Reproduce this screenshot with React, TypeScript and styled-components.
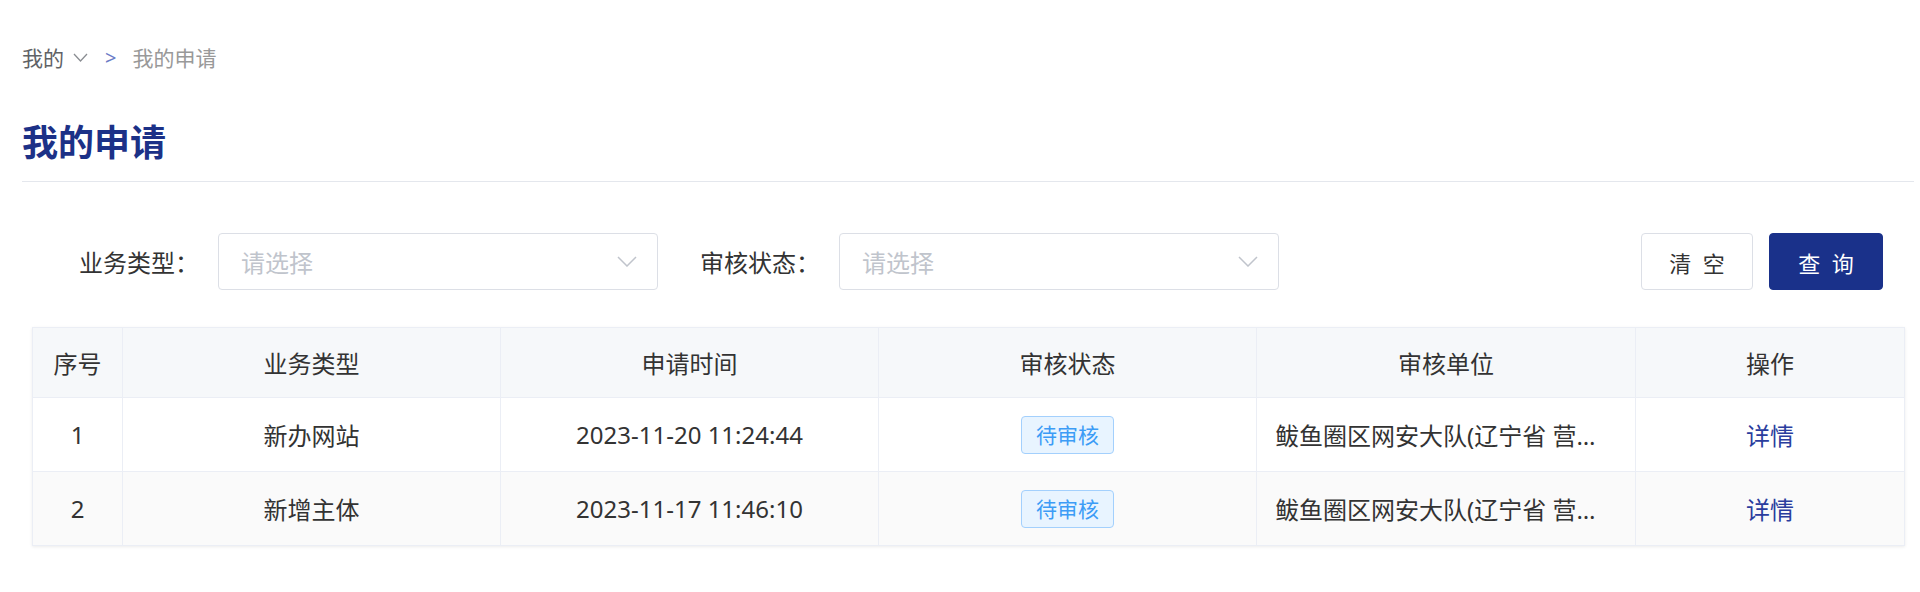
import React from 'react';
import styled, { createGlobalStyle } from 'styled-components';

const GlobalStyle = createGlobalStyle`
  html, body {
    margin: 0;
    padding: 0;
    background: #ffffff;
  }
  body {
    font-family: "Noto Sans", "Noto Sans CJK SC", sans-serif;
    color: #333333;
  }
`;

const Page = styled.div`
  width: 1920px;
  box-sizing: border-box;
  padding: 45px 6px 40px 22px;
`;

const Breadcrumb = styled.div`
  display: flex;
  align-items: center;
  height: 24px;
  font-size: 21px;
`;

const CrumbLink = styled.span`
  color: #5f6266;
  display: flex;
  align-items: center;
`;

const CrumbCaret = styled.svg`
  margin-left: 9px;
`;

const CrumbSep = styled.span`
  color: #6a7cc6;
  margin: 0 16px 0 17px;
  font-size: 20px;
`;

const CrumbCurrent = styled.span`
  color: #999999;
`;

const TitleBar = styled.div`
  margin-top: 50px;
  padding-bottom: 14px;
  border-bottom: 1px solid #e4e7ed;
`;

const Title = styled.h1`
  margin: 0;
  font-size: 36px;
  line-height: 48px;
  font-weight: bold;
  color: #1c3187;
`;

const Content = styled.div`
  padding: 0 10px;
`;

const FilterRow = styled.div`
  display: flex;
  align-items: center;
  margin-top: 51px;
  padding: 0 21px 0 47px;
`;

const Label = styled.span`
  font-size: 24px;
  color: #333333;
  margin-right: 19px;
  white-space: nowrap;
`;

const Select = styled.div`
  width: 440px;
  height: 57px;
  box-sizing: border-box;
  border: 1px solid #dcdfe6;
  border-radius: 4px;
  display: flex;
  align-items: center;
  justify-content: space-between;
  padding: 0 20px 0 22px;
  margin-right: 42px;
`;

const Placeholder = styled.span`
  font-size: 24px;
  color: #c0c4cc;
`;

const Buttons = styled.div`
  margin-left: auto;
  display: flex;
  gap: 16px;
`;

const Button = styled.button<{ $primary?: boolean }>`
  height: 57px;
  width: ${p => (p.$primary ? '114px' : '112px')};
  box-sizing: border-box;
  border-radius: 4px;
  border: 1px solid ${p => (p.$primary ? '#1a318a' : '#dcdfe6')};
  background: ${p => (p.$primary ? '#1a318a' : '#ffffff')};
  color: ${p => (p.$primary ? '#ffffff' : '#333333')};
  font-family: "Noto Sans", "Noto Sans CJK SC", sans-serif;
  font-size: 22px;
  letter-spacing: 3px;
  padding: 0 0 0 3px;
  cursor: pointer;
`;

const Table = styled.table`
  margin-top: 37px;
  width: 1872px;
  table-layout: fixed;
  border-collapse: collapse;
  border: 1px solid #ebeef5;
  box-shadow: 0 1px 3px rgba(0, 0, 0, 0.08);
  font-size: 24px;
`;

const Th = styled.th<{ $w: number }>`
  width: ${p => p.$w}px;
  height: 69px;
  background: #f6f8fa;
  color: #333333;
  font-weight: normal;
  border: 1px solid #ebeef5;
  text-align: center;
  padding: 0;
`;

const Row = styled.tr<{ $striped?: boolean }>`
  background: ${p => (p.$striped ? '#fafafa' : '#ffffff')};
`;

const Td = styled.td`
  height: 73px;
  border: 1px solid #ebeef5;
  text-align: center;
  padding: 0 18px;
  color: #333333;
  white-space: nowrap;
  overflow: hidden;
  text-overflow: ellipsis;
`;

const Tag = styled.span`
  display: inline-block;
  height: 38px;
  line-height: 36px;
  box-sizing: border-box;
  padding: 0 14px;
  font-size: 21px;
  color: #3c9cf6;
  background: #e8f4ff;
  border: 1px solid #a3d0fd;
  border-radius: 4px;
`;

const DetailLink = styled.a`
  color: #2a3d9e;
  text-decoration: none;
  cursor: pointer;
`;

const Chevron = () => (
  <svg width="20" height="11" viewBox="0 0 20 11" fill="none">
    <path d="M1 1 L10 10 L19 1" stroke="#c0c4cc" strokeWidth="1.5" />
  </svg>
);

const columns = [
  { title: '序号', w: 89 },
  { title: '业务类型', w: 377 },
  { title: '申请时间', w: 377 },
  { title: '审核状态', w: 377 },
  { title: '审核单位', w: 378 },
  { title: '操作', w: 268 },
];

const rows = [
  { id: 1, type: '新办网站', time: '2023-11-20 11:24:44', status: '待审核', unit: '鲅鱼圈区网安大队(辽宁省 营口市 鲅鱼圈区)' },
  { id: 2, type: '新增主体', time: '2023-11-17 11:46:10', status: '待审核', unit: '鲅鱼圈区网安大队(辽宁省 营口市 鲅鱼圈区)' },
];

const App: React.FC = () => {
  return (
    <Page>
      <GlobalStyle />
      <Breadcrumb>
        <CrumbLink>
          我的
          <CrumbCaret width="15" height="9" viewBox="0 0 15 9" fill="none">
            <path d="M1 1 L7.5 8 L14 1" stroke="#8a8d92" strokeWidth="1.3" />
          </CrumbCaret>
        </CrumbLink>
        <CrumbSep>&gt;</CrumbSep>
        <CrumbCurrent>我的申请</CrumbCurrent>
      </Breadcrumb>

      <TitleBar>
        <Title>我的申请</Title>
      </TitleBar>

      <Content>
        <FilterRow>
          <Label>业务类型：</Label>
          <Select>
            <Placeholder>请选择</Placeholder>
            <Chevron />
          </Select>
          <Label>审核状态：</Label>
          <Select>
            <Placeholder>请选择</Placeholder>
            <Chevron />
          </Select>
          <Buttons>
            <Button>清 空</Button>
            <Button $primary>查 询</Button>
          </Buttons>
        </FilterRow>

        <Table>
          <thead>
            <tr>
              {columns.map(c => (
                <Th key={c.title} $w={c.w}>
                  {c.title}
                </Th>
              ))}
            </tr>
          </thead>
          <tbody>
            {rows.map((r, i) => (
              <Row key={r.id} $striped={i % 2 === 1}>
                <Td>{r.id}</Td>
                <Td>{r.type}</Td>
                <Td>{r.time}</Td>
                <Td>
                  <Tag>{r.status}</Tag>
                </Td>
                <Td>{r.unit}</Td>
                <Td>
                  <DetailLink>详情</DetailLink>
                </Td>
              </Row>
            ))}
          </tbody>
        </Table>
      </Content>
    </Page>
  );
};

export default App;
